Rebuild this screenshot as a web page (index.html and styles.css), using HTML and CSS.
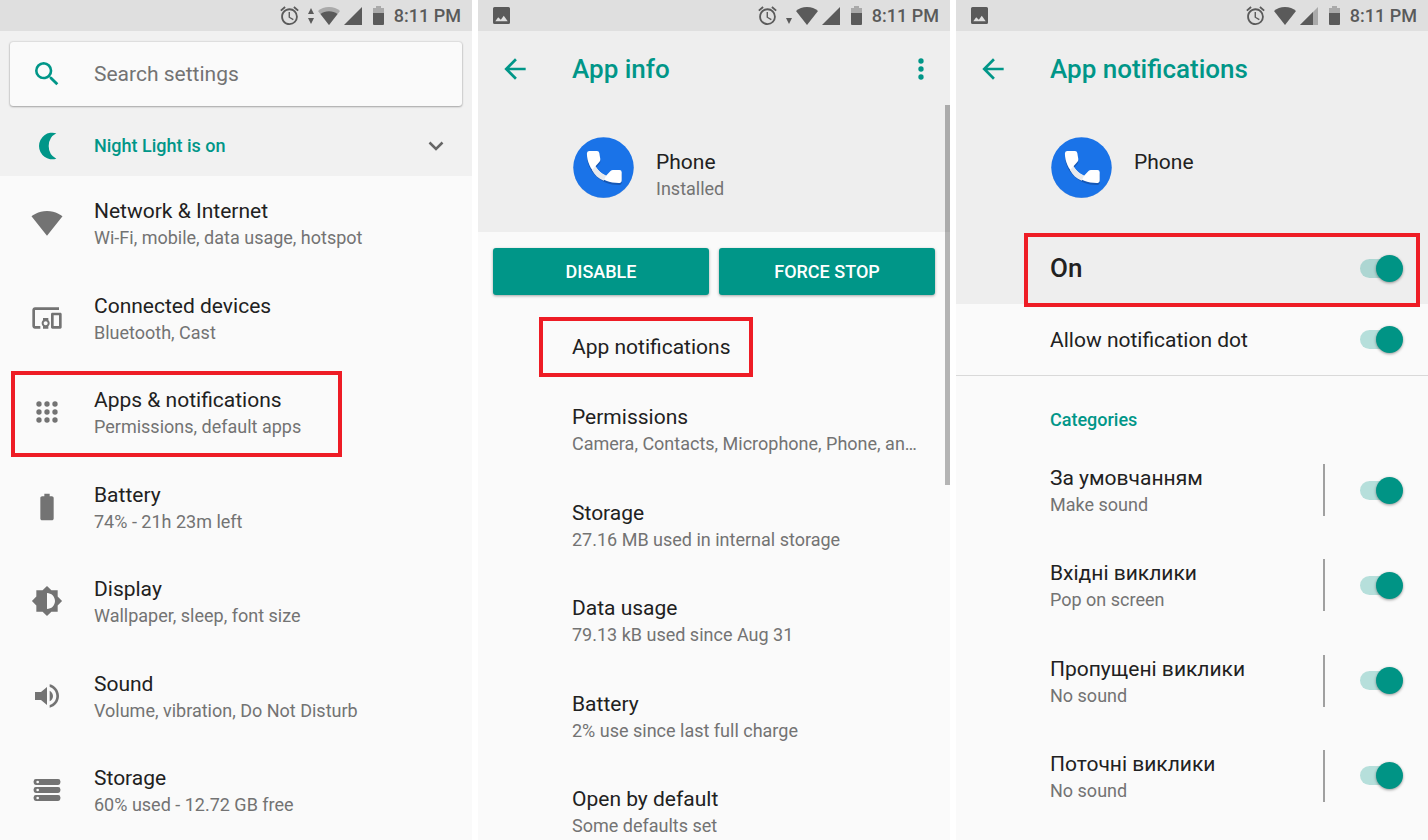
FILE: index.html
```html
<!DOCTYPE html>
<html lang="en">
<head>
  <meta charset="UTF-8" />
  <meta name="viewport" content="width=device-width, initial-scale=1.0"/>
  <title>App notifications</title>
  <link rel="stylesheet" href="styles.css">
</head>
<body>
  <!-- shared icons -->
  <svg class="sprite" aria-hidden="true">
    <symbol id="alarm" viewBox="2 1.5 20 20.5"><path d="M22 5.72l-4.6-3.86-1.29 1.53 4.6 3.86L22 5.72zM7.88 3.39L6.6 1.86 2 5.71l1.29 1.53 4.59-3.85zM12.5 8H11v6l4.75 2.85.75-1.23-4-2.37V8zM12 4c-4.97 0-9 4.03-9 9s4.02 9 9 9a9 9 0 0 0 0-18zm0 16c-3.87 0-7-3.13-7-7s3.13-7 7-7 7 3.13 7 7-3.13 7-7 7z"/></symbol>
    <symbol id="wifi" viewBox="0 0 24 24"><path d="M12.01 21.49L23.64 7c-.45-.34-4.93-4-11.64-4C5.28 3 .81 6.66.36 7l11.63 14.49.01.01.01-.01z"/></symbol>
    <symbol id="wifi-full" viewBox="0 0 22 18"><path d="M11 18L22 4C19 1.500 15.500 0 11 0S3 1.500 0 4z"/></symbol>
    <symbol id="wifi-part" viewBox="0 0 22 18"><path opacity=".4" d="M11 18L22 4C19 1.500 15.500 0 11 0S3 1.500 0 4z"/><path d="M11 18l8.500-11C17 5 14.500 4.200 11 4.200S5 5 2.500 7z"/></symbol>
    <symbol id="signal" viewBox="0 0 18 18"><path d="M18 0v18H0z"/></symbol>
    <symbol id="signal-part" viewBox="0 0 18 18"><path opacity=".4" d="M18 0v18H0z"/><path d="M13 5v13H0z"/></symbol>
    <symbol id="status-battery" viewBox="0 0 11 19"><path opacity=".4" d="M3 0h5v2h3v5H0V2h3z"/><path d="M0 7h11v11q0 1-1 1H1q-1 0-1-1z"/></symbol>
    <symbol id="picture" viewBox="0 0 17 17"><path fill-rule="evenodd" d="M1.500 0h14Q17 0 17 1.500v14q0 1.500-1.500 1.500h-14Q0 17 0 15.500v-14Q0 0 1.500 0zM2.300 14.200h12.400l-3.900-5.400-3 4-2.600-2.500z"/></symbol>
    <symbol id="back" viewBox="0 0 24 24"><path d="M20 11H7.830l5.590-5.590L12 4l-8 8 8 8 1.410-1.410L7.830 13H20v-2z"/></symbol>
    <symbol id="phone" viewBox="0 0 61 61">
      <circle cx="30.500" cy="31" r="30" fill="#0d47a1" opacity=".35"/>
      <circle cx="30.500" cy="30.500" r="30.200" fill="#1a73e8"/>
      <path transform="translate(0 2)" fill="#1557b5" d="M16 14h8q2 0 2.300 2l1 6q.2 1.500-.8 2.800l-4 4.500c3 5 6 7 10.500 9.500l4.500-4.800q1-1 2.500-1h6.500q2.200 0 2.200 2.200v8q0 2.800-3 2.800C28 46 14 33 13.900 16.500q0-2.500 2.100-2.500z"/>
      <path fill="#fff" d="M16 14h8q2 0 2.300 2l1 6q.2 1.500-.8 2.800l-4 4.500c3 5 6 7 10.500 9.500l4.500-4.800q1-1 2.500-1h6.500q2.200 0 2.200 2.200v8q0 2.800-3 2.800C28 46 14 33 13.900 16.500q0-2.500 2.100-2.500z"/>
      <path fill="#e8eaed" d="M22.500 29.300c3 5 6 7 10.500 9.500l-2.300 4.900c-5.500-2.200-9-5.700-11.700-10.700z"/>
    </symbol>
  </svg>

  <main class="screens">
    <section class="screen">
      <div class="status light">
        <svg class="alarm"><use href="#alarm"/></svg>
        <svg class="traffic" viewBox="0 0 6 16"><path d="M3 0l3 6H0zM3 16l3-6H0z"/></svg>
        <svg class="wifi"><use href="#wifi-part"/></svg>
        <svg class="signal"><use href="#signal"/></svg>
        <svg class="battery"><use href="#status-battery"/></svg>
        <span class="time">8:11 PM</span>
      </div>
      <div class="top">
        <label class="search">
          <svg class="icon teal" viewBox="0 0 24 24"><path d="M15.500 14h-.79l-.28-.27A6.471 6.471 0 0 0 16 9.500 6.500 6.500 0 1 0 9.500 16c1.610 0 3.090-.59 4.230-1.570l.27.28v.79l5 4.990L20.490 19l-4.990-5zm-6 0C7.010 14 5 11.990 5 9.500S7.010 5 9.500 5 14 7.010 14 9.500 11.990 14 9.500 14z"/></svg>
          <input type="text" name="search" placeholder="Search settings" aria-label="Search settings" />
        </label>
        <button class="night" type="button">
          <svg class="icon teal" viewBox="0 0 24 24"><path d="M19 2.460A10 10 0 1 0 19 21.540A10.800 10.800 0 0 1 19 2.460z"/></svg>
          <span>Night Light is on</span>
          <svg class="chevron" viewBox="0 0 16 10"><path d="M1.500 1.500L8 8l6.500-6.500"/></svg>
        </button>
      </div>
      <nav class="list settings">
        <a class="item" href="#network">
          <svg class="icon"><use href="#wifi"/></svg>
          <span class="text"><b>Network &amp; Internet</b><small>Wi-Fi, mobile, data usage, hotspot</small></span>
        </a>
        <a class="item" href="#devices">
          <svg class="icon" viewBox="0 0 24 24"><path d="M3 6h18V4H3c-1.100 0-2 .9-2 2v12c0 1.100.9 2 2 2h4v-2H3V6zm10 6H9v1.780c-.61.55-1 1.330-1 2.220s.39 1.670 1 2.220V20h4v-1.780c.61-.55 1-1.340 1-2.220s-.39-1.670-1-2.220V12zm-2 5.500c-.83 0-1.500-.67-1.500-1.500s.67-1.500 1.500-1.500 1.500.67 1.500 1.500-.67 1.500-1.500 1.500zM22 8h-6c-.5 0-1 .5-1 1v10c0 .5.5 1 1 1h6c.5 0 1-.5 1-1V9c0-.5-.5-1-1-1zm-1 10h-4v-8h4v8z"/></svg>
          <span class="text"><b>Connected devices</b><small>Bluetooth, Cast</small></span>
        </a>
        <a class="item" href="#apps">
          <svg class="icon" viewBox="0 0 24 24"><circle cx="6" cy="6" r="2"/><circle cx="12" cy="6" r="2"/><circle cx="18" cy="6" r="2"/><circle cx="6" cy="12" r="2"/><circle cx="12" cy="12" r="2"/><circle cx="18" cy="12" r="2"/><circle cx="6" cy="18" r="2"/><circle cx="12" cy="18" r="2"/><circle cx="18" cy="18" r="2"/></svg>
          <span class="text"><b>Apps &amp; notifications</b><small>Permissions, default apps</small></span>
          <span class="mark mark-apps"></span>
        </a>
        <a class="item" href="#battery">
          <svg class="icon" viewBox="0 0 24 24"><path d="M15.670 4H14V2h-4v2H8.330C7.600 4 7 4.600 7 5.330v15.330C7 21.400 7.600 22 8.330 22h7.330c.74 0 1.340-.6 1.340-1.330V5.330C17 4.600 16.400 4 15.670 4z"/></svg>
          <span class="text"><b>Battery</b><small>74% - 21h 23m left</small></span>
        </a>
        <a class="item" href="#display">
          <svg class="icon" viewBox="0 0 24 24"><path d="M20 15.310L23.310 12 20 8.690V4h-4.690L12 .69 8.690 4H4v4.690L.69 12 4 15.310V20h4.690L12 23.310 15.310 20H20v-4.690zM12 18V6c3.310 0 6 2.690 6 6s-2.690 6-6 6z"/></svg>
          <span class="text"><b>Display</b><small>Wallpaper, sleep, font size</small></span>
        </a>
        <a class="item" href="#sound">
          <svg class="icon" viewBox="0 0 24 24"><path d="M3 9v6h4.500l4.500 3.800V5.200L7.500 9zm13.500 3c0-1.770-1.020-3.290-2.500-4.030v8.050c1.480-.73 2.500-2.250 2.500-4.020zM14 3.230v2.060c2.890.86 5 3.540 5 6.710s-2.110 5.850-5 6.710v2.060c4.010-.91 7-4.490 7-8.770s-2.990-7.860-7-8.770z"/></svg>
          <span class="text"><b>Sound</b><small>Volume, vibration, Do Not Disturb</small></span>
        </a>
        <a class="item" href="#storage">
          <svg class="icon" viewBox="0 0 24 24"><rect x="2" y="3.800" width="20" height="4.400" rx="1.600"/><rect x="2" y="9.800" width="20" height="4.400" rx="1.600"/><rect x="2" y="15.800" width="20" height="4.400" rx="1.600"/><g fill="#fafafa"><circle cx="5" cy="6" r="1"/><circle cx="5" cy="12" r="1"/><circle cx="5" cy="18" r="1"/></g></svg>
          <span class="text"><b>Storage</b><small>60% used - 12.72 GB free</small></span>
        </a>
      </nav>
    </section>

    <section class="screen">
      <div class="status">
        <svg class="picture"><use href="#picture"/></svg>
        <svg class="alarm"><use href="#alarm"/></svg>
        <svg class="traffic" viewBox="0 0 6 16"><path d="M3 16l3-6H0z"/></svg>
        <svg class="wifi"><use href="#wifi-full"/></svg>
        <svg class="signal"><use href="#signal"/></svg>
        <svg class="battery"><use href="#status-battery"/></svg>
        <span class="time">8:11 PM</span>
      </div>
      <header class="head">
        <div class="appbar">
          <button type="button" aria-label="Back"><svg class="icon teal"><use href="#back"/></svg></button>
          <h1>App info</h1>
          <button type="button" aria-label="More options"><svg class="icon teal" viewBox="0 0 24 24"><circle cx="12" cy="6" r="2"/><circle cx="12" cy="12" r="2"/><circle cx="12" cy="18" r="2"/></svg></button>
        </div>
        <div class="app">
          <svg class="app-icon"><use href="#phone"/></svg>
          <span class="text"><b>Phone</b><small>Installed</small></span>
        </div>
      </header>
      <div class="actions">
        <button type="button">DISABLE</button>
        <button type="button">FORCE STOP</button>
      </div>
      <nav class="list info">
        <a class="item first" href="#notifications">
          <span class="text"><b>App notifications</b></span>
          <span class="mark mark-notifications"></span>
        </a>
        <a class="item" href="#permissions"><span class="text"><b>Permissions</b><small>Camera, Contacts, Microphone, Phone, an…</small></span></a>
        <a class="item" href="#app-storage"><span class="text"><b>Storage</b><small>27.16 MB used in internal storage</small></span></a>
        <a class="item" href="#data"><span class="text"><b>Data usage</b><small>79.13 kB used since Aug 31</small></span></a>
        <a class="item" href="#app-battery"><span class="text"><b>Battery</b><small>2% use since last full charge</small></span></a>
        <a class="item" href="#defaults"><span class="text"><b>Open by default</b><small>Some defaults set</small></span></a>
      </nav>
      <div class="scrollbar"></div>
    </section>

    <section class="screen">
      <div class="status">
        <svg class="picture"><use href="#picture"/></svg>
        <svg class="alarm"><use href="#alarm"/></svg>
        <svg class="wifi"><use href="#wifi-full"/></svg>
        <svg class="signal"><use href="#signal-part"/></svg>
        <svg class="battery"><use href="#status-battery"/></svg>
        <span class="time">8:11 PM</span>
      </div>
      <header class="head">
        <div class="appbar">
          <button type="button" aria-label="Back"><svg class="icon teal"><use href="#back"/></svg></button>
          <h1>App notifications</h1>
        </div>
        <div class="app">
          <svg class="app-icon"><use href="#phone"/></svg>
          <span class="text"><b>Phone</b></span>
        </div>
        <label class="row master">
          <span>On</span>
          <input class="toggle" type="checkbox" checked />
          <span class="mark mark-on"></span>
        </label>
      </header>
      <label class="row dot">
        <span>Allow notification dot</span>
        <input class="toggle" type="checkbox" checked />
      </label>
      <h2>Categories</h2>
      <div class="list categories">
        <label class="item">
          <span class="text"><b lang="uk">За умовчанням</b><small>Make sound</small></span>
          <span class="switch"><input class="toggle" type="checkbox" checked /></span>
        </label>
        <label class="item">
          <span class="text"><b lang="uk">Вхідні виклики</b><small>Pop on screen</small></span>
          <span class="switch"><input class="toggle" type="checkbox" checked /></span>
        </label>
        <label class="item">
          <span class="text"><b lang="uk">Пропущені виклики</b><small>No sound</small></span>
          <span class="switch"><input class="toggle" type="checkbox" checked /></span>
        </label>
        <label class="item">
          <span class="text"><b lang="uk">Поточні виклики</b><small>No sound</small></span>
          <span class="switch"><input class="toggle" type="checkbox" checked /></span>
        </label>
      </div>
    </section>
  </main>
</body>
</html>
```
FILE: styles.css
```css
* { box-sizing: border-box; }

body {
  margin: 0;
  background: #fff;
  color: #212121;
  font-family: Roboto, sans-serif;
  font-size: 21px;
  line-height: 28px;
}

button,
input {
  font-family: inherit;
  border: none;
  background: none;
  margin: 0;
  padding: 0;
}

button { cursor: pointer; }

svg {
  display: block;
  flex: none;
  fill: #737373;
}

.sprite {
  position: absolute;
  width: 0;
  height: 0;
}

.screens {
  display: grid;
  grid-template-columns: repeat(3, 1fr);
  gap: 6px;
  min-height: 100vh;
}

.screen {
  position: relative;
  display: flex;
  flex-direction: column;
  min-width: 0;
  background: #fafafa;
}

/* status bar */
.status {
  display: flex;
  align-items: center;
  justify-content: flex-end;
  height: 31px;
  padding: 0 11px 0 15px;
  background: #dfdfdf;
}

.status svg { fill: #5a5a5a; }

.status .picture {
  width: 17px;
  height: 17px;
  margin-right: auto;
}

.status .alarm {
  width: 19px;
  height: 19px;
  margin-right: 9px;
}

.status .traffic {
  width: 6px;
  height: 16px;
  margin-right: 4px;
}

.status .wifi {
  width: 22px;
  height: 18px;
  margin-right: 4px;
}

.status .signal {
  width: 18px;
  height: 18px;
  margin-right: 11px;
}

.status .battery {
  width: 11px;
  height: 19px;
  margin-right: 10px;
}

.time {
  color: #5a5a5a;
  font-size: 18px;
  font-weight: 500;
}

.icon {
  width: 32px;
  height: 32px;
}

.teal { fill: #009688; }

/* settings screen */
.top {
  background: #f1f1f1;
  padding: 11px 10px 0;
}

.search {
  display: flex;
  align-items: center;
  gap: 31px;
  height: 64px;
  padding: 0 21px;
  background: #fafafa;
  border-radius: 3px;
  box-shadow: 0 0 2px rgba(0,0,0,0.25), 0 1px 2px rgba(0,0,0,0.25);
}

.search input {
  flex: 1;
  min-width: 0;
  font-size: 21px;
  outline: none;
}

.search input::placeholder { color: #737373; }

.night {
  display: flex;
  align-items: center;
  gap: 31px;
  width: 100%;
  height: 70px;
  padding: 10px 18px 0 21px;
  color: #009688;
  font-size: 18px;
  font-weight: 500;
  line-height: 26px;
}

.chevron {
  width: 16px;
  height: 10px;
  margin-left: auto;
  fill: none;
  stroke: #666;
  stroke-width: 2.5px;
}

/* lists */
.list {
  flex: 1;
  display: flex;
  flex-direction: column;
  justify-content: space-between;
}

.item {
  position: relative;
  display: flex;
  color: inherit;
  text-decoration: none;
}

.text {
  flex: 1;
  min-width: 0;
}

.text b,
.text small {
  display: block;
  font-weight: 400;
  white-space: nowrap;
}

.text small {
  color: #737373;
  font-size: 18px;
  line-height: 26px;
}

.settings { padding: 21px 16px 22px 31px; }

.settings .item { gap: 31px; }

.settings .icon { margin-top: 10px; }

.info { padding: 38px 16px 1px 94px; }

.info .first { margin-bottom: 1px; }

.categories { padding: 31px 25px 36px 94px; }

/* app header */
.head { background: #eee; }

.appbar {
  display: flex;
  align-items: center;
  height: 76px;
  padding: 0 13px 0 21px;
}

.appbar h1 {
  flex: 1;
  margin: 0 0 0 41px;
  color: #009688;
  font-size: 26px;
  font-weight: 500;
  line-height: 32px;
}

.app {
  display: flex;
  gap: 22px;
  height: 125px;
  padding: 30px 16px 0 95px;
}

.app-icon {
  width: 61px;
  height: 61px;
}

.app .text { padding-top: 11px; }

.actions {
  display: flex;
  gap: 10px;
  padding: 16px 15px 0;
}

.actions button {
  flex: 1;
  height: 47px;
  border-radius: 3px;
  background: #009688;
  color: #fff;
  font-size: 18px;
  font-weight: 500;
  box-shadow: 0 1px 3px rgba(0,0,0,0.35);
}

/* notifications screen */
.row {
  position: relative;
  display: flex;
  align-items: center;
  justify-content: space-between;
  height: 72px;
  padding: 0 25px 0 94px;
}

.master {
  font-size: 26px;
  font-weight: 500;
  line-height: 32px;
}

.dot { border-bottom: 1px solid #d9d9d9; }

h2 {
  margin: 31px 16px 0 94px;
  color: #009688;
  font-size: 18px;
  font-weight: 500;
  line-height: 26px;
}

.switch {
  display: flex;
  align-items: center;
  height: 52px;
  padding-left: 35px;
  border-left: 2px solid #a0a0a0;
}

.toggle {
  appearance: none;
  position: relative;
  flex: none;
  width: 43px;
  height: 27px;
  cursor: pointer;
}

.toggle::before,
.toggle::after {
  content: "";
  position: absolute;
}

.toggle::before {
  inset: 4px 3px 4px 0;
  border-radius: 10px;
  background: rgba(0,150,136,0.27);
}

.toggle::after {
  top: 0;
  right: 0;
  width: 27px;
  height: 27px;
  border-radius: 50%;
  background: #009485;
  box-shadow: 0 1px 3px rgba(0,0,0,0.4);
}

.toggle:not(:checked)::after {
  right: auto;
  left: 0;
  background: #fafafa;
}

/* red frames over the highlighted rows */
.mark {
  position: absolute;
  z-index: 1;
  border: 4px solid #ee1c25;
  pointer-events: none;
}

.mark-apps {
  top: -15px;
  bottom: -17px;
  left: -20px;
  width: 331px;
}

.mark-notifications {
  top: -16px;
  bottom: -16px;
  left: -33px;
  width: 214px;
}

.mark-on {
  top: 1px;
  bottom: -3px;
  left: 68px;
  right: 8px;
}

.scrollbar {
  position: absolute;
  top: 105px;
  right: 0;
  width: 5px;
  height: 380px;
  background: rgba(0,0,0,0.28);
}
```
